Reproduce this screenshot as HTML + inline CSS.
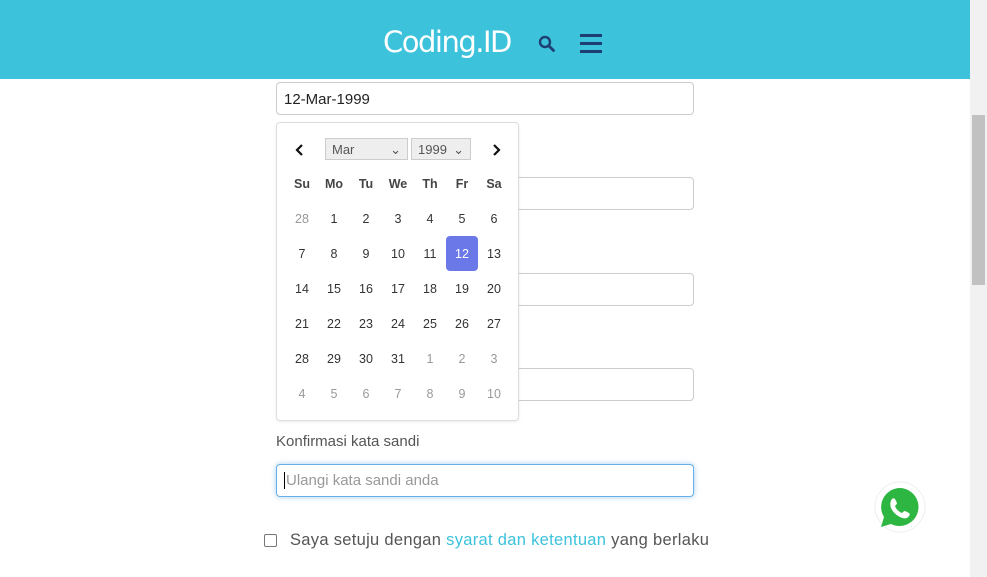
<!DOCTYPE html>
<html><head><meta charset="utf-8"><style>
*{box-sizing:border-box;margin:0;padding:0}
body{width:987px;height:577px;overflow:hidden;background:#fff;font-family:"Liberation Sans",sans-serif;position:relative;color:#333}
.hdr{position:absolute;left:0;top:0;width:970px;height:79px;background:#3dc2dc}
.logo{position:absolute;left:383px;top:25px;color:#fff;font-size:29px;font-family:"DejaVu Sans",sans-serif;letter-spacing:-1.5px}
.sb{position:absolute;left:970px;top:0;width:17px;height:577px;background:#f1f1f1}
.thumb{position:absolute;left:972px;top:115px;width:13px;height:170px;background:#c1c1c1}
.inp{position:absolute;left:276px;width:418px;height:33px;border:1px solid #ccc;border-radius:4px;background:#fff}
.cal{position:absolute;left:276px;top:122px;width:243px;height:299px;border:1px solid #ddd;border-radius:4px;background:#fff;box-shadow:0 1px 3px rgba(0,0,0,.08)}
.sel{position:absolute;top:15px;height:22px;background:#eee;border:1px solid #ccc;font-size:13px;color:#555;padding:3px 6px}
.d{position:absolute;width:32px;text-align:center;font-size:12.5px;color:#333}
.o{color:#999}
.h{font-weight:bold;color:#444;font-size:12.5px}
</style></head><body>
<div class="hdr">
<div class="logo">Coding.ID</div>
<svg style="position:absolute;left:538px;top:35px" width="18" height="18" viewBox="0 0 18 18"><circle cx="7" cy="7" r="5" fill="none" stroke="#1d3f72" stroke-width="2.4"/><path d="M11 11l4.5 4.5" stroke="#1d3f72" stroke-width="2.8" stroke-linecap="round"/></svg>
<div style="position:absolute;left:580px;top:34px;width:22px;height:2.5px;background:#1d3f72"></div>
<div style="position:absolute;left:580px;top:42px;width:22px;height:2.5px;background:#1d3f72"></div>
<div style="position:absolute;left:580px;top:50px;width:22px;height:2.5px;background:#1d3f72"></div>
</div>
<div class="sb"></div><div class="thumb"></div>
<div class="inp" style="top:82px;padding:8px 7px;font-size:15px;color:#222">12-Mar-1999</div>
<div class="inp" style="top:177px"></div>
<div class="inp" style="top:273px"></div>
<div class="inp" style="top:368px"></div>
<div class="cal">
<svg style="position:absolute;left:18px;top:20px" width="10" height="14" viewBox="0 0 10 14"><path d="M7 2L2 7l5 5" fill="none" stroke="#111" stroke-width="2.2"/></svg>
<svg style="position:absolute;left:214px;top:20px" width="10" height="14" viewBox="0 0 10 14"><path d="M3 2l5 5-5 5" fill="none" stroke="#111" stroke-width="2.2"/></svg>
<div class="sel" style="left:48px;width:83px">Mar<span style="float:right">⌄</span></div>
<div class="sel" style="left:134px;width:60px">1999<span style="float:right">⌄</span></div>
<div style="position:absolute;left:169px;top:113px;width:32px;height:35px;background:#6a78e8;border-radius:4px"></div>
<div id="g"></div>
</div>
<div style="position:absolute;left:276px;top:433px;font-size:15px;color:#555">Konfirmasi kata sandi</div>
<div class="inp" style="top:464px;height:33px;border-color:#66afe9;box-shadow:0 0 6px rgba(102,175,233,.6);padding:7px 7px;font-size:15px;color:#999"><span style="border-left:1px solid #000;padding-left:1px">Ulangi kata sandi anda</span></div>
<div style="position:absolute;left:264px;top:534px;width:13px;height:13px;border:1px solid #777;border-radius:2px"></div>
<div style="position:absolute;left:290px;top:531px;font-size:16.5px;letter-spacing:0.3px;color:#555">Saya setuju dengan <span style="color:#3dc2dc">syarat dan ketentuan</span> yang berlaku</div>
<svg style="position:absolute;left:873px;top:481px" width="54" height="54" viewBox="0 0 54 54"><circle cx="27" cy="26" r="25" fill="#fff" stroke="#eee"/><path d="M27 7a19 19 0 0 0-16 29l-3 10 10-3A19 19 0 1 0 27 7z" fill="#2db742"/><path d="M19 18c1-1 2-1 3 0l2 4c0 1-1 2-2 3 1 3 4 6 7 7 1-1 2-2 3-2l4 2c1 1 1 2 0 3-2 3-5 3-9 1-4-2-7-5-9-9-1-3-1-7 1-9z" fill="#fff"/></svg>
<script>
var g=document.getElementById('g'),h='',hd=['Su','Mo','Tu','We','Th','Fr','Sa'];
for(var i=0;i<7;i++)h+='<div class="d h" style="left:'+(9+i*32)+'px;top:54px">'+hd[i]+'</div>';
var days=[28];for(var i=1;i<=31;i++)days.push(i);for(var i=1;i<=10;i++)days.push(i);
for(var k=0;k<42;k++){var r=Math.floor(k/7),c=k%7,o=(k==0||k>31);var sel=(k==12);
h+='<div class="d'+(o?' o':'')+'" style="left:'+(9+c*32)+'px;top:'+(89+r*35)+'px;'+(sel?'color:#fff':'')+'">'+days[k]+'</div>';}
g.innerHTML=h;
</script>
</body></html>
